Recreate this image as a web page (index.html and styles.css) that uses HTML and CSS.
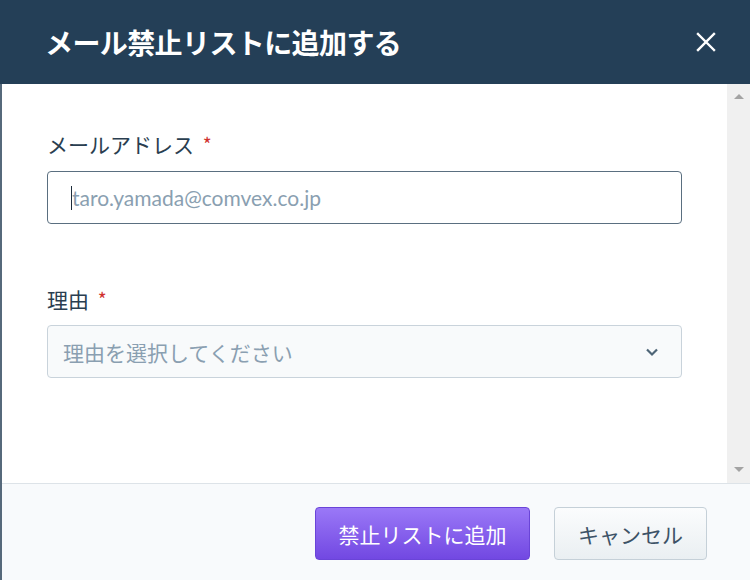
FILE: index.html
```html
<!DOCTYPE html>
<html lang="ja">
<head>
    <meta charset="utf-8">
    <title>メール禁止リストに追加する</title>
    <link rel="stylesheet" href="styles.css">
</head>
<body>
    <div class="modal">
        <div class="modal-header">
            <h2 class="modal-title">メール禁止リストに追加する</h2>
            <button class="close-btn" aria-label="閉じる">
                <svg width="20" height="20" viewBox="0 0 20 20">
                    <path d="M2 2 L18 18 M18 2 L2 18" stroke="#fff" stroke-width="2.4" stroke-linecap="square"/>
                </svg>
            </button>
        </div>
        <div class="modal-body">
            <div class="form">
                <label class="field-label">メールアドレス <span class="req">*</span></label>
                <div class="input-box">
                    <span class="caret"></span>
                    <span class="placeholder latin">taro.yamada@comvex.co.jp</span>
                </div>
                <label class="field-label second">理由 <span class="req">*</span></label>
                <div class="select-box">
                    <span class="placeholder">理由を選択してください</span>
                    <svg width="14" height="10" viewBox="0 0 14 10">
                        <path d="M2 2.5 L7 7.5 L12 2.5" fill="none" stroke="#4e6577" stroke-width="2.2"/>
                    </svg>
                </div>
            </div>
            <div class="scrollbar">
                <span class="arrow up"></span>
                <span class="arrow down"></span>
            </div>
        </div>
        <div class="modal-footer">
            <button class="btn btn-primary">禁止リストに追加</button>
            <button class="btn btn-cancel">キャンセル</button>
        </div>
    </div>
</body>
</html>
```

FILE: styles.css
```css
body {
    margin: 0;
    width: 750px;
    height: 580px;
    overflow: hidden;
    font-family: "Noto Sans CJK JP", "Noto Sans", sans-serif;
    background: #56697b;
}

.modal {
    display: flex;
    flex-direction: column;
    height: 580px;
}

.modal-header {
    height: 84px;
    background-color: #243f57;
    display: flex;
    align-items: center;
    justify-content: space-between;
    padding: 0 32px 0 45px;
}
.modal-title {
    margin: 0;
    color: #fff;
    font-size: 28px;
    font-weight: bold;
    letter-spacing: -0.6px;
}
.close-btn {
    background: none;
    border: none;
    padding: 0;
    width: 24px;
    height: 24px;
    display: flex;
    align-items: center;
    justify-content: center;
    cursor: pointer;
}

.modal-body {
    height: 399px;
    margin-left: 2px;
    background: #fff;
    display: flex;
}
.form {
    flex: 1;
    padding: 46px 45px 0 45px;
    display: flex;
    flex-direction: column;
}
.field-label {
    font-size: 21px;
    line-height: 28px;
    color: #2a3e50;
    margin-bottom: 13px;
}
.field-label.second {
    margin-top: 61px;
    margin-bottom: 12px;
}
.req {
    color: #d0312d;
    margin-left: 4px;
    font-size: 19px;
    vertical-align: top;
}

.input-box {
    height: 51px;
    border: 1px solid #5a6f80;
    border-radius: 4px;
    display: flex;
    align-items: center;
    padding-left: 23px;
}
.caret {
    width: 1px;
    height: 24px;
    background: #1d2d3b;
}
.placeholder {
    color: #8a9fb1;
    font-size: 21px;
}
.latin {
    font-family: Lato, "Noto Sans", sans-serif;
    font-size: 21px;
}

.select-box {
    height: 51px;
    border: 1px solid #c9d3db;
    border-radius: 4px;
    background: #f8fafb;
    display: flex;
    align-items: center;
    justify-content: space-between;
    padding: 0 22px 0 15px;
}

.scrollbar {
    width: 23px;
    background: #f0f0f0;
    display: flex;
    flex-direction: column;
    justify-content: space-between;
    align-items: center;
    padding: 10px 0 11px;
}
.arrow {
    width: 0;
    height: 0;
    border-left: 5px solid transparent;
    border-right: 5px solid transparent;
}
.arrow.up {
    border-bottom: 5px solid #a3a3a3;
}
.arrow.down {
    border-top: 5px solid #a3a3a3;
}

.modal-footer {
    flex: 1;
    margin-left: 2px;
    background: #f8fafc;
    border-top: 1px solid #dde3e8;
    display: flex;
    justify-content: flex-end;
    align-items: flex-start;
    gap: 24px;
    padding: 23px 43px 0 0;
}
.btn {
    height: 53px;
    border-radius: 4px;
    font-family: "Noto Sans CJK JP", sans-serif;
    font-size: 21px;
    cursor: pointer;
}
.btn-primary {
    width: 215px;
    color: #fff;
    border: 1px solid #6a44d8;
    background: linear-gradient(#9a78f7, #7248e2);
}
.btn-cancel {
    width: 153px;
    color: #3c5266;
    border: 1px solid #c5d0d8;
    background: linear-gradient(#fbfcfd, #eaeff2);
}
```
